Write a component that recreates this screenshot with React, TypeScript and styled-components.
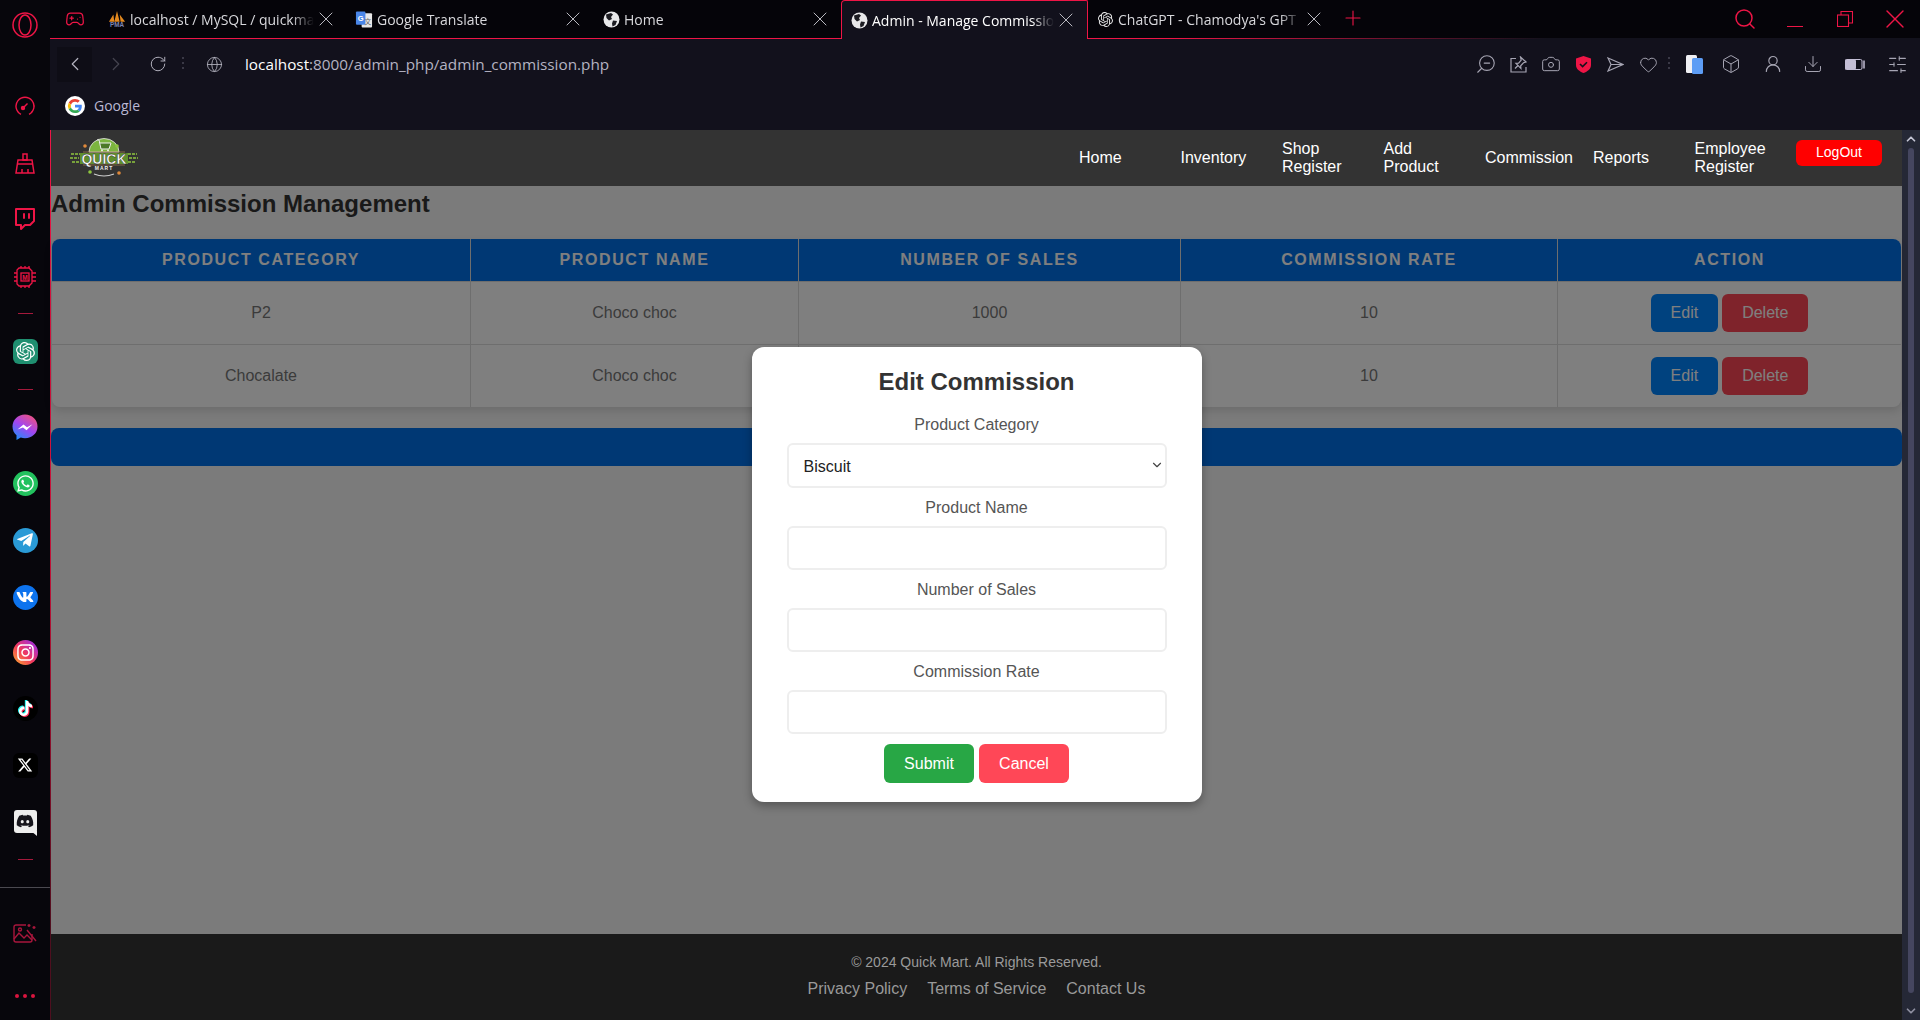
import React from "react";
import styled, { createGlobalStyle } from "styled-components";
import {
  ZoomOut, Camera, Heart, Box, UserRound, Download, SlidersHorizontal, RotateCw, Globe,
  ChevronLeft, ChevronRight, ChevronUp, ChevronDown, Search, X, Plus, Gamepad2, Twitch,
} from "lucide-react";
import { FaWhatsapp, FaTelegramPlane, FaVk, FaInstagram, FaDiscord } from "react-icons/fa";
import { FaXTwitter } from "react-icons/fa6";
import { SiOpenai, SiTiktok } from "react-icons/si";

const PINK = "#ee1546";
const ARIAL = `"Liberation Sans", Arial, sans-serif`;
const UI = `"Open Sans", "Noto Sans", sans-serif`;

const Global = createGlobalStyle`
  html, body { margin: 0; padding: 0; width: 100%; height: 100%; overflow: hidden; background: #07060c; }
  * { box-sizing: border-box; }
`;

const Shell = styled.div`
  display: flex;
  width: 1920px;
  height: 1020px;
  overflow: hidden;
  font-family: ${ARIAL};
`;

/* ---------- sidebar ---------- */
const Sidebar = styled.aside`
  width: 50px;
  flex: none;
  display: flex;
  flex-direction: column;
  align-items: center;
  padding-top: 9px;
  background: #07060c;
  color: ${PINK};
`;
const SideSlot = styled.div<{ $top: number; $dim?: boolean }>`
  height: 32px;
  width: 50px;
  flex: none;
  margin-top: ${(p) => p.$top}px;
  display: flex;
  align-items: center;
  justify-content: center;
  color: ${(p) => (p.$dim ? "#a8163c" : PINK)};
`;
const SideRule = styled.div`
  width: 15px;
  height: 1px;
  background: #a5193c;
`;
const SideDivider = styled.div`
  width: 50px;
  height: 1px;
  background: #4a4950;
`;
const AppTile = styled.div<{ $bg: string; $round?: boolean; $color?: string }>`
  width: 25px;
  height: 25px;
  display: flex;
  align-items: center;
  justify-content: center;
  border-radius: ${(p) => (p.$round ? "50%" : "6px")};
  background: ${(p) => p.$bg};
  color: ${(p) => p.$color ?? "#fff"};
`;
const TikTokGlyph = styled(SiTiktok)`
  filter: drop-shadow(-1px -1px 0 #25f4ee) drop-shadow(1px 1px 0 #fe2c55);
`;
const DiscordTile = styled.div`
  position: relative;
  width: 23px;
  height: 23px;
  display: flex;
  align-items: center;
  justify-content: center;
  border-radius: 3px;
  background: #eeeeee;
  color: #16151c;
`;
const DiscordTail = styled.div`
  position: absolute;
  right: 0;
  bottom: -3px;
  width: 0;
  height: 0;
  border-left: 6px solid transparent;
  border-top: 5px solid #eeeeee;
`;
const Dots = styled.div`
  display: flex;
  gap: 4px;
`;
const Dot = styled.span`
  width: 4px;
  height: 4px;
  border-radius: 50%;
  background: #d9153f;
`;

/* ---------- browser frame ---------- */
const Frame = styled.div`
  flex: 1;
  min-width: 0;
  display: flex;
  flex-direction: column;
`;
const TabBar = styled.div`
  position: relative;
  height: 39px;
  flex: none;
  display: flex;
  background: #050409;
  border-bottom: 1px solid transparent;
  border-image: linear-gradient(90deg, ${PINK} 0%, ${PINK} 60%, #12111c 80%) 1;
`;
const TabBarLeft = styled.div`
  width: 50px;
  flex: none;
  display: flex;
  align-items: center;
  justify-content: center;
  color: ${PINK};
`;
const Tab = styled.div<{ $active?: boolean }>`
  width: 247px;
  height: ${(p) => (p.$active ? "39px" : "38px")};
  flex: none;
  display: flex;
  align-items: center;
  padding: 0 9px 0 8px;
  font-family: ${UI};
  font-size: 14px;
  color: ${(p) => (p.$active ? "#ffffff" : "#d8d8dc")};
  ${(p) =>
    p.$active
      ? `background: #12111c;
         border: 1px solid ${PINK};
         border-bottom: 0;
         border-top-left-radius: 4px;
         border-top-right-radius: 2px;`
      : ""}
`;
const Fav = styled.div`
  width: 18px;
  height: 18px;
  flex: none;
  display: flex;
  align-items: center;
  justify-content: center;
`;
const TabTitle = styled.span`
  flex: 1;
  min-width: 0;
  margin-left: 4px;
  white-space: nowrap;
  overflow: hidden;
  -webkit-mask-image: linear-gradient(90deg, #000 88%, transparent 100%);
  mask-image: linear-gradient(90deg, #000 88%, transparent 100%);
`;
const TabClose = styled(X)`
  flex: none;
  color: #b9b9c0;
  margin: 0 0 1px 0;
`;
const NewTab = styled(Plus)`
  flex: none;
  align-self: center;
  margin: 0 0 3px 6px;
  color: ${PINK};
`;
const WindowButtons = styled.div`
  margin-left: auto;
  display: flex;
  align-items: center;
  padding-bottom: 1px;
  color: ${PINK};
`;
const WinSlot = styled.div`
  width: 50px;
  height: 36px;
  display: flex;
  align-items: center;
  justify-content: center;
`;
const MinLine = styled.div`
  width: 16px;
  height: 1px;
  margin-top: 15px;
  background: ${PINK};
`;
const Toolbar = styled.div`
  flex: none;
  background: #12111c;
`;
const AddressRow = styled.div`
  height: 50px;
  display: flex;
  align-items: center;
  color: #a9a8b6;
`;
const NavBox = styled.div<{ $w: number; $on?: boolean; $dim?: boolean }>`
  width: ${(p) => p.$w}px;
  height: 35px;
  flex: none;
  display: flex;
  align-items: center;
  justify-content: center;
  background: ${(p) => (p.$on ? "#0e0d16" : "transparent")};
  color: ${(p) => (p.$dim ? "#45444f" : "#b4b3bf")};
`;
const VDots = styled.div<{ $ml?: number }>`
  width: 2px;
  height: 14px;
  flex: none;
  margin-left: ${(p) => p.$ml ?? 0}px;
  background: repeating-linear-gradient(180deg, #3a3946 0 2px, transparent 2px 5px);
`;
const Url = styled.div`
  margin-left: 1px;
  font-family: ${UI};
  font-size: 15.3px;
  color: #b4b3c2;
  white-space: nowrap;
`;
const Host = styled.span`
  color: #ffffff;
`;
const ToolIcons = styled.div`
  margin-left: auto;
  display: flex;
  align-items: center;
  padding-right: 8px;
`;
const ToolIcon = styled.div<{ $w: number }>`
  width: ${(p) => p.$w}px;
  display: flex;
  justify-content: center;
  align-items: center;
  flex: none;
  color: #a6a5b3;
`;
const MirroredZoom = styled(ZoomOut)`
  transform: scaleX(-1);
`;
const BookmarkRow = styled.div`
  height: 41px;
  display: flex;
  align-items: center;
  gap: 9px;
  padding: 0 0 8px 15px;
  font-family: ${UI};
  font-size: 14px;
  color: #b9b8d4;
`;

/* ---------- page ---------- */
const Viewport = styled.div`
  flex: 1;
  min-height: 0;
  display: flex;
  border-left: 1px solid transparent;
  border-image: linear-gradient(180deg, ${PINK} 0%, #c01237 50%, #4f0f1f 90%) 1;
`;
const Page = styled.div`
  flex: 1;
  min-width: 0;
  display: flex;
  flex-direction: column;
`;
const Scrollbar = styled.div`
  width: 18px;
  flex: none;
  display: flex;
  flex-direction: column;
  align-items: center;
  padding-top: 2px;
  background: #252836;
  color: #c4c5d4;
`;
const Thumb = styled.div`
  width: 6px;
  flex: 1;
  margin: 2px 0 11px;
  border-radius: 3px;
  background: #45465f;
`;
const ScrollDown = styled(ChevronDown)`
  flex: none;
  margin-bottom: 2px;
  color: #8e8fa0;
`;
const NavBar = styled.nav`
  height: 56px;
  flex: none;
  display: flex;
  align-items: center;
  padding: 0 20px 0 19px;
  background: #333333;
`;
const NavLinks = styled.div`
  margin-left: auto;
  display: flex;
  align-items: center;
  gap: 20px;
`;
const NavLink = styled.a<{ $wide?: boolean }>`
  width: ${(p) => (p.$wide ? 88 : 81.5)}px;
  flex: none;
  font-size: 16px;
  line-height: 18px;
  color: #ffffff;
`;
const LogOut = styled.button`
  width: 86px;
  height: 26px;
  margin-bottom: 11px;
  padding: 0 0 2px;
  border: 0;
  border-radius: 6px;
  background: #ff0000;
  color: #fff;
  font-family: ${ARIAL};
  font-size: 14px;
`;
const Body = styled.main`
  position: relative;
  flex: 1;
  min-height: 0;
  background: #f6f6f6;
`;
const Heading = styled.h1`
  margin: 4px 0 21px 0;
  font-size: 24px;
  line-height: 28px;
  font-weight: 700;
  color: #333333;
`;
const TableWrap = styled.div`
  margin: 0 1px 21px;
  border-radius: 8px;
  box-shadow: 0 4px 8px rgba(0, 0, 0, 0.12);
  overflow: hidden;
  background: #fff;
`;
const Table = styled.table`
  width: 100%;
  table-layout: fixed;
  border-collapse: separate;
  border-spacing: 0;
`;
const Th = styled.th<{ $w?: number }>`
  width: ${(p) => (p.$w ? `${p.$w}px` : "auto")};
  height: 43px;
  padding: 0;
  background: #0070e8;
  border-right: 1px solid #dddddd;
  border-bottom: 1px solid #dddddd;
  color: #ffffff;
  font-size: 16px;
  font-weight: 700;
  letter-spacing: 1.6px;
  text-transform: uppercase;
  &:last-child { border-right: 0; }
`;
const Td = styled.td`
  padding: 12px;
  border-right: 1px solid #dddddd;
  border-bottom: 1px solid #dddddd;
  color: #777777;
  font-size: 16px;
  text-align: center;
  &:last-child { border-right: 0; }
  tr:last-child & { border-bottom: 0; }
`;
const Actions = styled.div`
  display: flex;
  justify-content: center;
  gap: 4px;
`;
const RowButton = styled.button<{ $bg: string }>`
  height: 38px;
  padding: 0 20px;
  border: 0;
  border-radius: 6px;
  background: ${(p) => p.$bg};
  color: #fff;
  font-family: ${ARIAL};
  font-size: 16px;
`;
const BlueBar = styled.div`
  height: 38px;
  border-radius: 8px;
  background: #0070e8;
`;
const Overlay = styled.div`
  position: absolute;
  inset: 0;
  display: flex;
  justify-content: center;
  align-items: flex-start;
  padding-top: 161px;
  background: rgba(0, 0, 0, 0.5);
`;
const Modal = styled.form`
  width: 450px;
  height: 455px;
  display: flex;
  flex-direction: column;
  align-items: stretch;
  padding: 21px 35px 0;
  border-radius: 12px;
  background: #ffffff;
  box-shadow: 0 4px 10px rgba(0, 0, 0, 0.3);
  text-align: center;
`;
const ModalTitle = styled.h2`
  margin: 0 0 20px;
  font-size: 24px;
  line-height: 28px;
  font-weight: 700;
  color: #333333;
`;
const FieldLabel = styled.label`
  display: block;
  margin: 0 0 9px;
  font-size: 16px;
  line-height: 18px;
  color: #555555;
`;
const SelectWrap = styled.div`
  position: relative;
  height: 45px;
  margin-bottom: 11px;
`;
const Select = styled.select`
  height: 45px;
  width: 100%;
  appearance: none;
  padding: 2px 10px 0 15px;
  border: 2px solid #eeeeee;
  border-radius: 6px;
  background: #fff;
  color: #222222;
  font-family: ${ARIAL};
  font-size: 16px;
`;
const SelectArrow = styled(ChevronDown)`
  position: absolute;
  right: 3px;
  top: 15px;
  color: #444444;
  pointer-events: none;
`;
const Input = styled.input`
  height: 44px;
  width: 100%;
  margin-bottom: 11px;
  padding: 0 15px;
  border: 2px solid #eeeeee;
  border-radius: 6px;
  background: #fff;
`;
const ModalButtons = styled.div`
  display: flex;
  justify-content: center;
  gap: 5px;
  margin-top: -1px;
`;
const ModalButton = styled.button<{ $bg: string }>`
  width: 90px;
  height: 39px;
  border: 0;
  border-radius: 6px;
  background: ${(p) => p.$bg};
  color: #fff;
  font-family: ${ARIAL};
  font-size: 16px;
`;
const Footer = styled.footer`
  height: 86px;
  flex: none;
  padding-top: 20px;
  background: #1a1a1a;
  text-align: center;
`;
const Copy = styled.p`
  margin: 0 0 10px;
  font-size: 14px;
  line-height: 16px;
  color: #9a9a9a;
`;
const FooterLinks = styled.div`
  display: flex;
  justify-content: center;
  gap: 20px;
`;
const FooterLink = styled.a`
  font-size: 16px;
  line-height: 18px;
  color: #999999;
`;

/* ---------- drawings ---------- */
const OperaIcon = () => (
  <svg width="26" height="26" viewBox="0 0 26 26" fill="none" stroke={PINK} strokeWidth="1.5">
    <ellipse cx="13" cy="13" rx="12" ry="12" />
    <ellipse cx="13" cy="13" rx="6" ry="10" />
  </svg>
);
const GaugeIcon = () => (
  <svg width="20" height="20" viewBox="0 0 20 20" fill="none" stroke={PINK} strokeWidth="1.4">
    <path d="M6 18.300A9 9 0 1 1 14 18.300" />
    <path d="M7.500 12.500 12.500 7.500" />
    <circle cx="8" cy="12" r="1.500" fill={PINK} />
    <path d="M18.500 10h.8M16.500 16h.6" />
  </svg>
);
const BroomIcon = () => (
  <svg width="20" height="21" viewBox="0 0 20 21" fill="none" stroke={PINK} strokeWidth="1.5">
    <path d="M8 1h4v6H8z" />
    <path d="M3 7h14l2 13H1z" />
    <path d="M2 11h16M7 20v-4M13 20v-4" />
  </svg>
);
const ChipIcon = () => (
  <svg width="24" height="24" viewBox="0 0 24 24" fill="none" stroke={PINK} strokeWidth="1.300">
    <path d="M6 3h10l3 3v12l-3 3H6l-2-2V5z" />
    <rect x="8" y="8" width="8" height="8" />
    <path d="M8 1v2M12 1v2M16 1v2M8 21v2M12 21v2M16 21v2M1 8h3M1 12h3M1 16h3M19 8h4M19 12h4M19 16h4" />
    <text x="12" y="14.500" textAnchor="middle" fontSize="6.500" fontWeight="700" fontFamily={ARIAL} fill={PINK} stroke="none">M</text>
  </svg>
);
const GalleryIcon = () => (
  <svg width="24" height="22" viewBox="0 0 24 22" fill="none" stroke="#a8163c" strokeWidth="1.400">
    <path d="M13 3H3a2 2 0 0 0-2 2v13a2 2 0 0 0 2 2h14a2 2 0 0 0 2-2v-6" />
    <path d="M1 17l5-6 5 5 3-3 5 5" />
    <circle cx="7" cy="7.500" r="1.500" />
    <path d="M14 8l9 11M16 2v3M14.500 3.500h3M21 4v3M19.500 5.500h3" />
  </svg>
);
const GlobeFav = () => (
  <svg width="17" height="17" viewBox="0 0 17 17">
    <circle cx="8.500" cy="8.500" r="8" fill="#e8e8ea" />
    <path d="M3 3.500 8 2l2 1.500-2 2.500 1 2-3 1.500L3.500 7zM10 9.500l4 .5-1.500 4-3 1.500L9 12.500z" fill="#1c1c22" />
  </svg>
);
const PmaFav = () => (
  <svg width="20" height="20" viewBox="0 0 20 20">
    <path d="M1 13 6 5l1 8zM7 13l3-12 3 12zM14 13l-1-8 6 8z" fill="#e58a1f" />
    <text x="10" y="19" textAnchor="middle" fontSize="7" fontWeight="700" fontFamily={ARIAL} fill="#7f86b4">PMA</text>
  </svg>
);
const TranslateFav = () => (
  <svg width="19" height="19" viewBox="0 0 19 19">
    <rect x="7" y="3" width="11" height="15" rx="1" fill="#e8e8e8" />
    <rect x="1" y="1" width="10" height="14" rx="1" fill="#4a86e8" />
    <text x="6" y="11" textAnchor="middle" fontSize="8" fontWeight="700" fontFamily={ARIAL} fill="#fff">G</text>
    <text x="13.500" y="14" textAnchor="middle" fontSize="7" fontFamily={`"Noto Sans CJK SC", sans-serif`} fill="#666">文</text>
  </svg>
);
const GoogleFav = () => (
  <svg width="20" height="20" viewBox="0 0 48 48">
    <circle cx="24" cy="24" r="24" fill="#fff" />
    <g transform="translate(7 7) scale(.71)">
      <path fill="#EA4335" d="M24 9.500c3.500 0 6.700 1.200 9.200 3.600l6.900-6.900C35.900 2.400 30.500 0 24 0 14.600 0 6.500 5.400 2.600 13.200l8 6.200C12.400 13.700 17.700 9.500 24 9.500z" />
      <path fill="#4285F4" d="M46.900 24.500c0-1.600-.1-3.100-.4-4.500H24v9h12.900c-.6 3-2.200 5.500-4.700 7.200l7.700 6c4.500-4.200 7-10.300 7-17.700z" />
      <path fill="#FBBC05" d="M10.500 28.600A14.500 14.500 0 0 1 10.500 19.400l-8-6.200a24 24 0 0 0 0 21.600z" />
      <path fill="#34A853" d="M24 48c6.500 0 11.900-2.100 15.900-5.800l-7.700-6c-2.200 1.400-4.900 2.300-8.200 2.300-6.300 0-11.600-4.200-13.500-9.900l-8 6.200C6.500 42.600 14.600 48 24 48z" />
    </g>
  </svg>
);
const RestoreIcon = () => (
  <svg width="16" height="16" viewBox="0 0 16 16" fill="none" stroke={PINK} strokeWidth="1.100">
    <rect x="0.500" y="4" width="11" height="11.500" />
    <path d="M4 4V.5h11.500V12H12" />
  </svg>
);
const MinimalPin = () => (
  <svg width="17" height="17" viewBox="0 0 17 17" fill="none" stroke="#a6a5b3" strokeWidth="1.200">
    <path d="M6 2.500H1v13.500h15v-5" />
    <path d="M10.500 1 16 6l-2.500.8-2.800 3 .2 2.500-5-5 2.700-.2 2.600-3z" />
    <path d="M5 12.500 8 9.500" />
  </svg>
);
const ShieldFill = () => (
  <svg width="15" height="17" viewBox="0 0 15 17">
    <path d="M7.500 0 15 2.500V9c0 4-3.500 6.500-7.500 8C3.500 15.500 0 13 0 9V2.500z" fill={PINK} />
    <path d="m4 8 2.600 2.600L11 6.200" fill="none" stroke="#12111c" strokeWidth="1.600" />
  </svg>
);
const SendIcon = () => (
  <svg width="17" height="15" viewBox="0 0 17 15" fill="none" stroke="#a6a5b3" strokeWidth="1.200">
    <path d="M1 1 16 7.500 1 14l3-6.500zM4 7.500h12" />
  </svg>
);
const PagesIcon = () => (
  <svg width="17" height="19" viewBox="0 0 17 19">
    <rect x="0" y="0" width="11" height="18" rx="1.500" fill="#f0f0f4" />
    <rect x="6" y="3" width="11" height="16" rx="1.500" fill="#5d9df5" />
  </svg>
);
const VideoIcon = () => (
  <svg width="20" height="11" viewBox="0 0 20 11">
    <rect x="0" y="0.500" width="17" height="10" rx="1.500" fill="none" stroke="#c4bfd6" />
    <rect x="0" y="0.500" width="11" height="10" rx="1.500" fill="#c4bfd6" />
    <path d="M19 1.500v8" stroke="#c4bfd6" strokeWidth="1.500" />
  </svg>
);
const MessengerIcon = () => (
  <svg width="26" height="27" viewBox="0 0 26 27">
    <defs>
      <linearGradient id="msg" x1="0.800" y1="0" x2="0.200" y2="1">
        <stop offset="0" stopColor="#f0527c" />
        <stop offset="0.500" stopColor="#a245f0" />
        <stop offset="1" stopColor="#1c8ffb" />
      </linearGradient>
    </defs>
    <path d="M13 0.500C6 0.500.5 5.600.5 12.500c0 3.600 1.500 6.700 4 8.800V26l4.300-2.400c1.300.4 2.700.6 4.200.6 7 0 12.500-5 12.500-11.700S20 .5 13 .5z" fill="url(#msg)" />
    <path d="m5.500 15.500 6-5 3.500 2.800 5.500-3-6 6-3.500-2.800z" fill="#fff" />
  </svg>
);
const Logo = () => (
  <svg width="68" height="42" viewBox="0 0 68 42">
    <path d="M19 15a15 13.500 0 0 1 30 0z" fill="#7cb53f" stroke="#e8e8e8" strokeWidth="0.800" />
    <path d="M27 3h2l2 9h8l2-6H30" stroke="#f0f0f0" strokeWidth="1" fill="#4c7a28" />
    <circle cx="32" cy="13.500" r="1" fill="#eee" />
    <circle cx="38" cy="13.500" r="1" fill="#eee" />
    <circle cx="15" cy="9" r="1.800" fill="#e0893a" />
    <circle cx="47" cy="9" r="1.800" fill="#8ec63f" />
    <circle cx="20" cy="35" r="1.800" fill="#8ec63f" />
    <circle cx="49" cy="36" r="1.800" fill="#e0893a" />
    <path d="M1 17h9M0 21h9M2 25h8M58 17h9M59 21h9M58 25h8" stroke="#8ec63f" strokeWidth="1.400" strokeDasharray="3 1" />
    <path d="M13 15h42M13 28h42" stroke="#a8804a" strokeWidth="0.700" />
    <rect x="10" y="16" width="48" height="11" fill="#5f8f2c" />
    <text x="34" y="26.500" textAnchor="middle" fontSize="14" fontWeight="700" fontFamily={ARIAL} fill="#fff" stroke="#1a1a1a" strokeWidth="0.400">QUICK</text>
    <text x="34" y="33" textAnchor="middle" fontSize="5" fontWeight="700" letterSpacing="1" fontFamily={ARIAL} fill="#eee">MART</text>
    <path d="M24 37q10 4 20 0" stroke="#cfcfcf" fill="none" strokeWidth="1.200" />
  </svg>
);

/* ---------- data ---------- */
const tabs = [
  { fav: <PmaFav />, title: "localhost / MySQL / quickmart" },
  { fav: <TranslateFav />, title: "Google Translate" },
  { fav: <GlobeFav />, title: "Home" },
  { fav: <GlobeFav />, title: "Admin - Manage Commission", active: true },
  { fav: <SiOpenai size={15} color="#e8e8e8" />, title: "ChatGPT - Chamodya's GPT" },
];
const rows = [
  { cat: "P2", name: "Choco choc", sales: "1000", rate: "10" },
  { cat: "Chocalate", name: "Choco choc", sales: "", rate: "10" },
];
const navItems = [
  { label: "Home" },
  { label: "Inventory" },
  { label: "Shop Register" },
  { label: "Add Product" },
  { label: "Commission", wide: true },
  { label: "Reports" },
  { label: "Employee Register" },
];

const App = () => (
  <Shell>
    <Global />
    <Sidebar>
      <SideSlot $top={0}><OperaIcon /></SideSlot>
      <SideSlot $top={49}><GaugeIcon /></SideSlot>
      <SideSlot $top={25}><BroomIcon /></SideSlot>
      <SideSlot $top={24}><Twitch size={24} strokeWidth={2} /></SideSlot>
      <SideSlot $top={26}><ChipIcon /></SideSlot>
      <SideSlot $top={4}><SideRule /></SideSlot>
      <SideSlot $top={6}><AppTile $bg="#1f8f70"><SiOpenai size={19} /></AppTile></SideSlot>
      <SideSlot $top={6}><SideRule /></SideSlot>
      <SideSlot $top={6}><MessengerIcon /></SideSlot>
      <SideSlot $top={24}><AppTile $bg="#22c15e" $round><FaWhatsapp size={19} /></AppTile></SideSlot>
      <SideSlot $top={25}><AppTile $bg="#2a9ad6" $round><FaTelegramPlane size={18} /></AppTile></SideSlot>
      <SideSlot $top={25}><AppTile $bg="#0d73ee" $round><FaVk size={18} /></AppTile></SideSlot>
      <SideSlot $top={23}><AppTile $bg="linear-gradient(45deg,#fdb42b,#f2385c 45%,#b22fc4 80%,#7d35dc)" $round><FaInstagram size={19} /></AppTile></SideSlot>
      <SideSlot $top={24}><AppTile $bg="#000" $round><TikTokGlyph size={15} /></AppTile></SideSlot>
      <SideSlot $top={25}><AppTile $bg="#000"><FaXTwitter size={16} /></AppTile></SideSlot>
      <SideSlot $top={24}><DiscordTile><FaDiscord size={18} /><DiscordTail /></DiscordTile></SideSlot>
      <SideSlot $top={6}><SideRule /></SideSlot>
      <SideSlot $top={-4}><SideDivider /></SideSlot>
      <SideSlot $top={14} $dim><GalleryIcon /></SideSlot>
      <SideSlot $top={31}><Dots><Dot /><Dot /><Dot /></Dots></SideSlot>
    </Sidebar>
    <Frame>
      <TabBar>
        <TabBarLeft><Gamepad2 size={20} strokeWidth={1.500} /></TabBarLeft>
        {tabs.map((t) => (
          <Tab key={t.title} $active={t.active}>
            <Fav>{t.fav}</Fav>
            <TabTitle>{t.title}</TabTitle>
            <TabClose size={24} strokeWidth={1} />
          </Tab>
        ))}
        <NewTab size={24} strokeWidth={1.100} />
        <WindowButtons>
          <WinSlot><Search size={24} strokeWidth={1.500} /></WinSlot>
          <WinSlot><MinLine /></WinSlot>
          <WinSlot><RestoreIcon /></WinSlot>
          <WinSlot><X size={32} strokeWidth={1} /></WinSlot>
        </WindowButtons>
      </TabBar>
      <Toolbar>
        <AddressRow>
          <NavBox $w={7} />
          <NavBox $w={35} $on><ChevronLeft size={22} strokeWidth={1.300} /></NavBox>
          <NavBox $w={48} $dim><ChevronRight size={22} strokeWidth={1.300} /></NavBox>
          <NavBox $w={36}><RotateCw size={18} strokeWidth={1.300} /></NavBox>
          <VDots $ml={6} />
          <NavBox $w={60}><Globe size={17} strokeWidth={1.200} /></NavBox>
          <Url><Host>localhost</Host>:8000/admin_php/admin_commission.php</Url>
          <ToolIcons>
            <ToolIcon $w={32}><MirroredZoom size={22} strokeWidth={1.200} /></ToolIcon>
            <ToolIcon $w={32}><MinimalPin /></ToolIcon>
            <ToolIcon $w={33}><Camera size={20} strokeWidth={1.200} /></ToolIcon>
            <ToolIcon $w={32}><ShieldFill /></ToolIcon>
            <ToolIcon $w={33}><SendIcon /></ToolIcon>
            <ToolIcon $w={32}><Heart size={19} strokeWidth={1.200} /></ToolIcon>
            <ToolIcon $w={10}><VDots /></ToolIcon>
            <ToolIcon $w={40}><PagesIcon /></ToolIcon>
            <ToolIcon $w={34}><Box size={20} strokeWidth={1.200} /></ToolIcon>
            <ToolIcon $w={50}><UserRound size={20} strokeWidth={1.400} /></ToolIcon>
            <ToolIcon $w={30}><Download size={20} strokeWidth={1.200} /></ToolIcon>
            <ToolIcon $w={54}><VideoIcon /></ToolIcon>
            <ToolIcon $w={30}><SlidersHorizontal size={21} strokeWidth={1.200} /></ToolIcon>
          </ToolIcons>
        </AddressRow>
        <BookmarkRow><GoogleFav />Google</BookmarkRow>
      </Toolbar>
      <Viewport>
        <Page>
          <NavBar>
            <Logo />
            <NavLinks>
              {navItems.map((n) => (
                <NavLink key={n.label} $wide={n.wide}>{n.label}</NavLink>
              ))}
              <LogOut type="button">LogOut</LogOut>
            </NavLinks>
          </NavBar>
          <Body>
            <Heading>Admin Commission Management</Heading>
            <TableWrap>
              <Table>
                <thead>
                  <tr>
                    <Th $w={419}>Product Category</Th>
                    <Th $w={328}>Product Name</Th>
                    <Th $w={382}>Number of Sales</Th>
                    <Th $w={377}>Commission Rate</Th>
                    <Th>Action</Th>
                  </tr>
                </thead>
                <tbody>
                  {rows.map((r) => (
                    <tr key={r.cat}>
                      <Td>{r.cat}</Td>
                      <Td>{r.name}</Td>
                      <Td>{r.sales}</Td>
                      <Td>{r.rate}</Td>
                      <Td>
                        <Actions>
                          <RowButton type="button" $bg="#0084ff">Edit</RowButton>
                          <RowButton type="button" $bg="#ff4757">Delete</RowButton>
                        </Actions>
                      </Td>
                    </tr>
                  ))}
                </tbody>
              </Table>
            </TableWrap>
            <BlueBar />
            <Overlay>
              <Modal>
                <ModalTitle>Edit Commission</ModalTitle>
                <FieldLabel>Product Category</FieldLabel>
                <SelectWrap>
                  <Select defaultValue="Biscuit">
                    <option>Biscuit</option>
                    <option>Chocalate</option>
                    <option>P2</option>
                  </Select>
                  <SelectArrow size={14} strokeWidth={2} />
                </SelectWrap>
                <FieldLabel>Product Name</FieldLabel>
                <Input />
                <FieldLabel>Number of Sales</FieldLabel>
                <Input />
                <FieldLabel>Commission Rate</FieldLabel>
                <Input />
                <ModalButtons>
                  <ModalButton type="button" $bg="#28a745">Submit</ModalButton>
                  <ModalButton type="button" $bg="#ff4757">Cancel</ModalButton>
                </ModalButtons>
              </Modal>
            </Overlay>
          </Body>
          <Footer>
            <Copy>© 2024 Quick Mart. All Rights Reserved.</Copy>
            <FooterLinks>
              <FooterLink>Privacy Policy</FooterLink>
              <FooterLink>Terms of Service</FooterLink>
              <FooterLink>Contact Us</FooterLink>
            </FooterLinks>
          </Footer>
        </Page>
        <Scrollbar>
          <ChevronUp size={14} strokeWidth={3} />
          <Thumb />
          <ScrollDown size={14} strokeWidth={3} />
        </Scrollbar>
      </Viewport>
    </Frame>
  </Shell>
);

export default App;
